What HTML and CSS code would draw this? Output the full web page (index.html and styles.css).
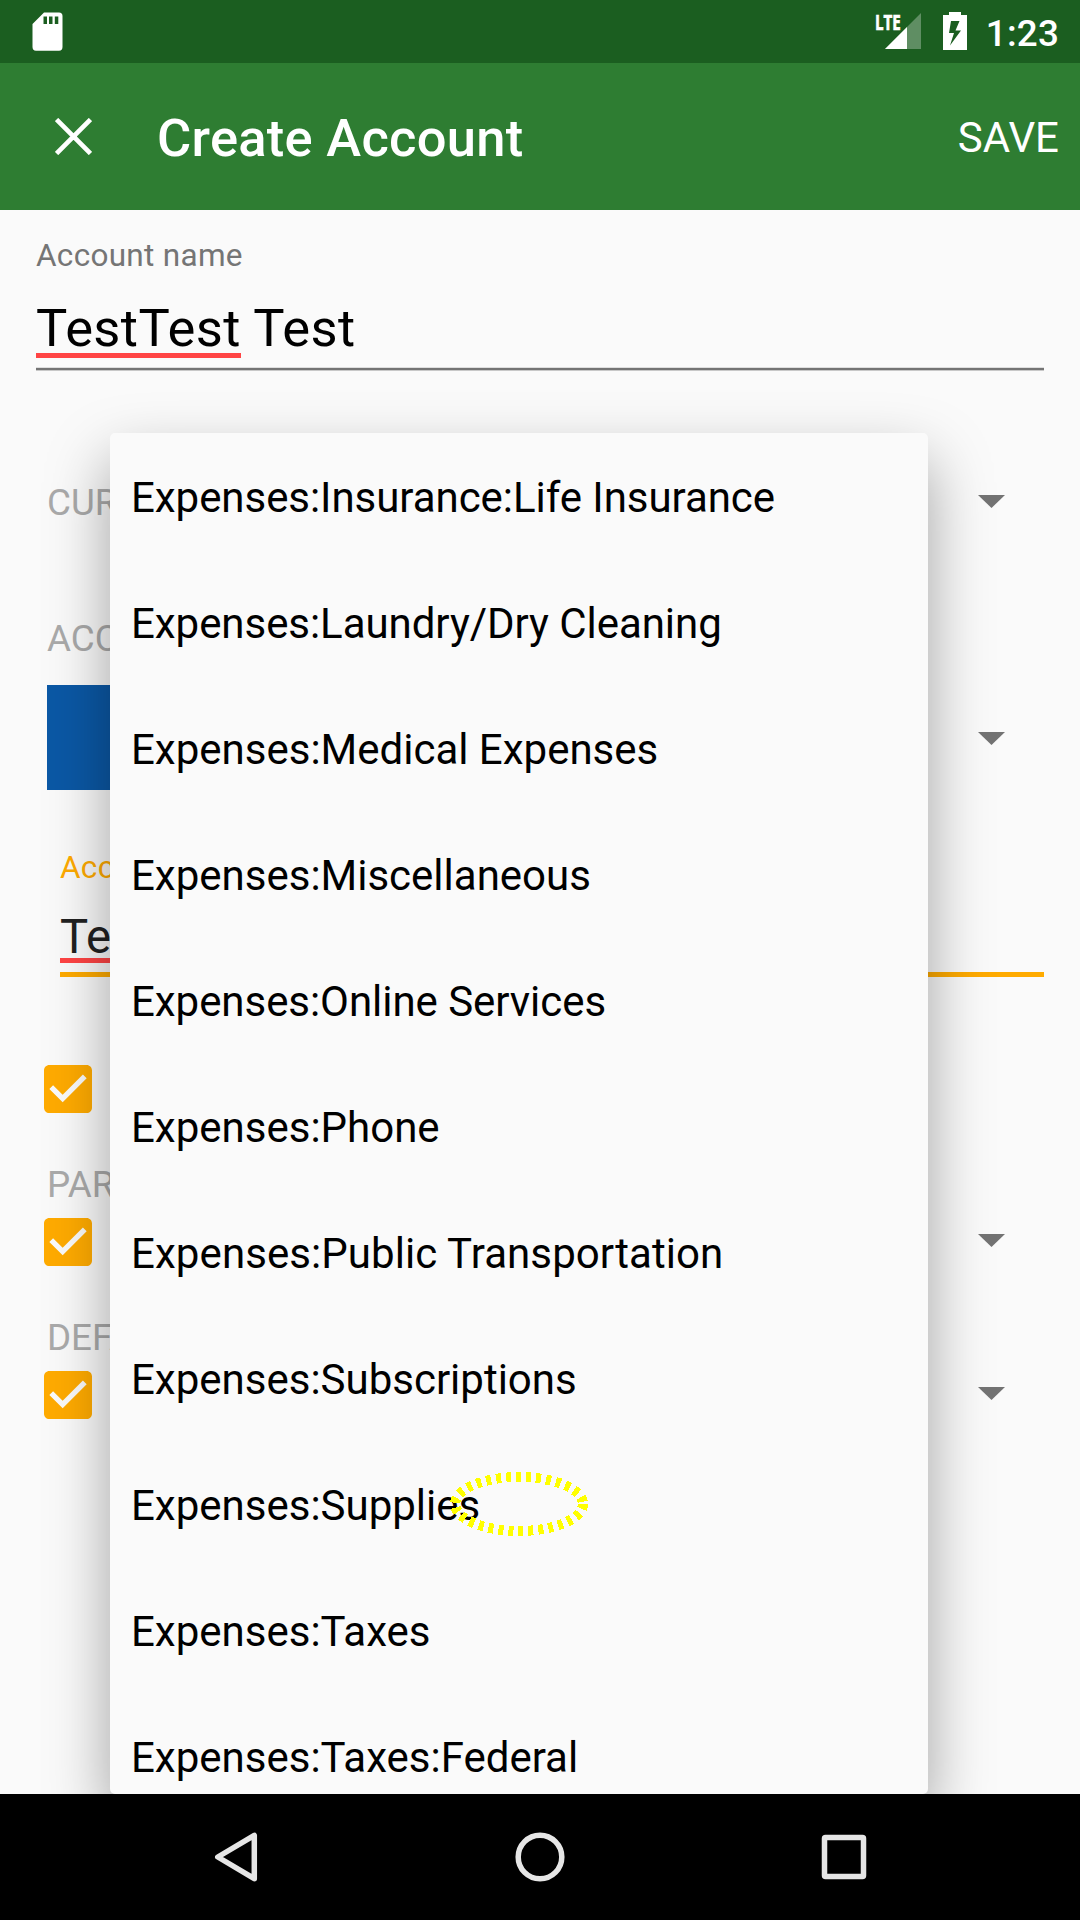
FILE: index.html
```html
<!DOCTYPE html>
<html lang="en">
<head>
<meta charset="utf-8">
<title>Create Account</title>
<link rel="stylesheet" href="styles.css">
</head>
<body>
<div class="screen">
  <header class="status-bar">
    <svg class="sd-icon" viewBox="0 0 32 40"><path fill-rule="evenodd" d="M12 .5H27Q30.500 .5 30.500 4V35Q30.500 38.700 27 38.700H4Q.5 38.700 .5 35V12ZM11.500 4.500V12H15V4.500ZM17 4.500V12H20.500V4.500ZM22.800 4.500V12H26.300V4.500Z"/></svg>
    <div class="status-right">
      <div class="signal">
        <svg class="signal-icon" viewBox="0 0 36 36"><path class="dim" d="M36 0V36H0Z"/><path d="M22 14V36H0Z"/></svg>
        <span class="lte">LTE</span>
      </div>
      <svg class="battery-icon" viewBox="0 0 24 38"><path fill-rule="evenodd" d="M6 0H18V3H24V38H0V3H6ZM8 9L6 21H11L7 33.500L18 18.500H12.500L16.500 9Z"/></svg>
      <span class="clock">1:23</span>
    </div>
  </header>
  <div class="app-bar">
    <svg class="close-icon" viewBox="0 0 36 36"><path d="M1.500 1.500L34.500 34.500M34.500 1.500L1.500 34.500"/></svg>
    <h1 class="title">Create Account</h1>
    <span class="save">SAVE</span>
  </div>
  <main class="form">
    <div class="field name-field">
      <label class="hint">Account name</label>
      <div class="value"><span class="misspelled">TestTest</span> Test</div>
    </div>
    <div class="row currency-row"><span class="caption">CURRENCY</span><i class="arrow"></i></div>
    <div class="caption color-caption">ACCOUNT COLOR</div>
    <div class="row color-row"><div class="swatch"></div><i class="arrow"></i></div>
    <div class="field description-field">
      <label class="hint">Account description</label>
      <div class="value"><span class="misspelled">TestTest</span> Test</div>
    </div>
    <div class="row check-row"><svg class="checkbox" viewBox="3 3 18 18"><path d="M19 3H5C3.900 3 3 3.900 3 5V19C3 20.100 3.900 21 5 21H19C20.100 21 21 20.100 21 19V5C21 3.900 20.100 3 19 3ZM10 17L5 12L6.410 10.590L10 14.170L17.590 6.580L19 8Z"/></svg></div>
    <div class="caption check-caption">PARENT ACCOUNT</div>
    <div class="row check-row"><svg class="checkbox" viewBox="3 3 18 18"><path d="M19 3H5C3.900 3 3 3.900 3 5V19C3 20.100 3.900 21 5 21H19C20.100 21 21 20.100 21 19V5C21 3.900 20.100 3 19 3ZM10 17L5 12L6.410 10.590L10 14.170L17.590 6.580L19 8Z"/></svg><i class="arrow"></i></div>
    <div class="caption check-caption">DEFAULT TRANSFER ACCOUNT</div>
    <div class="row check-row"><svg class="checkbox" viewBox="3 3 18 18"><path d="M19 3H5C3.900 3 3 3.900 3 5V19C3 20.100 3.900 21 5 21H19C20.100 21 21 20.100 21 19V5C21 3.900 20.100 3 19 3ZM10 17L5 12L6.410 10.590L10 14.170L17.590 6.580L19 8Z"/></svg><i class="arrow"></i></div>
    <ul class="popup">
      <li class="tight">Expenses:Insurance:Life Insurance</li>
      <li class="tight">Expenses:Laundry/Dry Cleaning</li>
      <li>Expenses:Medical Expenses</li>
      <li>Expenses:Miscellaneous</li>
      <li class="tight">Expenses:Online Services</li>
      <li>Expenses:Phone</li>
      <li class="loose">Expenses:Public Transportation</li>
      <li>Expenses:Subscriptions</li>
      <li>Expenses:Supplies</li>
      <li>Expenses:Taxes</li>
      <li>Expenses:Taxes:Federal</li>
    </ul>
    <svg class="marker" viewBox="0 0 138 64"><ellipse cx="69" cy="32" rx="64" ry="27"/></svg>
  </main>
  <nav class="nav-bar">
    <svg viewBox="0 0 50 50"><path d="M43.300 3.300V46.700L6.800 25Z"/></svg>
    <svg viewBox="0 0 50 50"><circle cx="25" cy="25" r="21.800"/></svg>
    <svg viewBox="0 0 50 50"><rect x="5.500" y="5.500" width="39" height="39" rx="1"/></svg>
  </nav>
</div>
</body>
</html>
```
FILE: styles.css
```css
* { box-sizing: border-box; }
body { margin: 0; font-family: Roboto, sans-serif; background: #fafafa; }
.screen { width: 1080px; height: 1920px; display: flex; flex-direction: column; overflow: hidden; }
svg { display: block; flex: none; }

.status-bar { height: 63px; flex: none; background: #1b5e20; display: flex; justify-content: space-between; padding: 12px 21px 0 32px; color: #fff; fill: #fff; }
.sd-icon { width: 32px; height: 40px; }
.status-right { display: flex; align-items: flex-start; }
.signal { position: relative; padding-top: 1px; margin-right: 22px; }
.signal-icon { width: 36px; height: 36px; }
.dim { opacity: .3; }
.lte { position: absolute; left: -10px; top: 0; font: 700 21px/21px "Open Sans", sans-serif; transform: scaleX(.72); transform-origin: 0 0; -webkit-text-stroke: .7px #fff; }
.battery-icon { width: 24px; height: 38px; margin-right: 19px; }
.clock { font-size: 36.75px; font-weight: 500; line-height: 43px; letter-spacing: .2px; }

.app-bar { height: 147px; flex: none; background: #2e7d32; color: #fff; display: flex; align-items: center; padding: 0 21px 0 55px; }
.close-icon { width: 37px; height: 37px; fill: none; stroke: #fff; stroke-width: 4.6; }
.title { flex: 1; margin: 3px 0 0 65px; font-size: 52.5px; font-weight: 500; line-height: 62px; letter-spacing: .27px; }
.save { font-size: 42px; line-height: 50px; margin-top: 2px; }

.form { flex: 1; position: relative; overflow: hidden; }
.field { display: flex; flex-direction: column; }
.hint { font-size: 31.5px; line-height: 38px; letter-spacing: .3px; }
.misspelled { background: linear-gradient(#f44, #f44) left bottom 1px / 100% 5px no-repeat; }
.name-field { margin: 0 36px; height: 160px; padding-top: 27px; border-bottom: 2px solid #747474; box-shadow: 0 1px 0 #c8c8c8, inset 0 -1px 0 #dedede; }
.name-field .hint { color: #757575; }
.name-field .value { font-size: 52.5px; line-height: 62px; margin-top: 22px; color: #000; letter-spacing: .37px; }
.row { display: flex; align-items: center; justify-content: space-between; padding: 0 75px 0 47px; }
.caption { font-size: 36.75px; line-height: 44px; color: #aaa; white-space: nowrap; }
.arrow { width: 27px; height: 13px; background: #737373; clip-path: polygon(0 0, 100% 0, 50% 100%); }
.currency-row { margin-top: 111px; height: 44px; }
.currency-row .arrow { margin-bottom: 3px; }
.color-caption { margin: 92px 47px 0; }
.color-row { margin-top: 24px; height: 105px; }
.color-row .arrow { margin-top: 2px; }
.swatch { width: 300px; height: 105px; background: #0b58a5; }
.description-field { margin: 59px 36px 0 60px; height: 128px; border-bottom: 5px solid #ffab00; }
.description-field .hint { color: #ffab00; }
.description-field .value { color: #212121; font-size: 47.25px; line-height: 56px; margin-top: 22px; }
.description-field .misspelled { background-position: left bottom 2px; }
.check-row { height: 48px; padding-left: 44px; }
.check-row .arrow { margin-bottom: 3px; }
.description-field + .check-row { margin-top: 88px; }
.checkbox { width: 48px; height: 48px; fill: #ffab00; }
.check-caption { margin: 62px 47px 9px; height: 34px; line-height: 34px; padding: 0; }
.check-row + .check-caption { margin-top: 55px; margin-bottom: 16px; }

.popup { position: absolute; left: 110px; top: 223px; width: 818px; height: 1361px; margin: 0; padding: 0 21px; list-style: none; background: #fafafa; border-radius: 5px; box-shadow: 0 28px 63px rgba(0, 0, 0, .36); overflow: hidden; }
.popup li { height: 126px; line-height: 130px; font-size: 42px; color: #000; white-space: nowrap; }
.popup .tight { letter-spacing: -.05px; }
.popup .loose { letter-spacing: .08px; }
.marker { position: absolute; left: 450px; top: 1262px; width: 138px; height: 64px; fill: none; stroke: #ff0; stroke-width: 10; stroke-dasharray: 5 5; shape-rendering: crispEdges; }

.nav-bar { height: 126px; flex: none; background: #000; display: flex; justify-content: center; align-items: center; gap: 254px; }
.nav-bar svg { width: 50px; height: 50px; fill: none; stroke: #e6e6e6; stroke-width: 5.5; stroke-linejoin: round; }
```
